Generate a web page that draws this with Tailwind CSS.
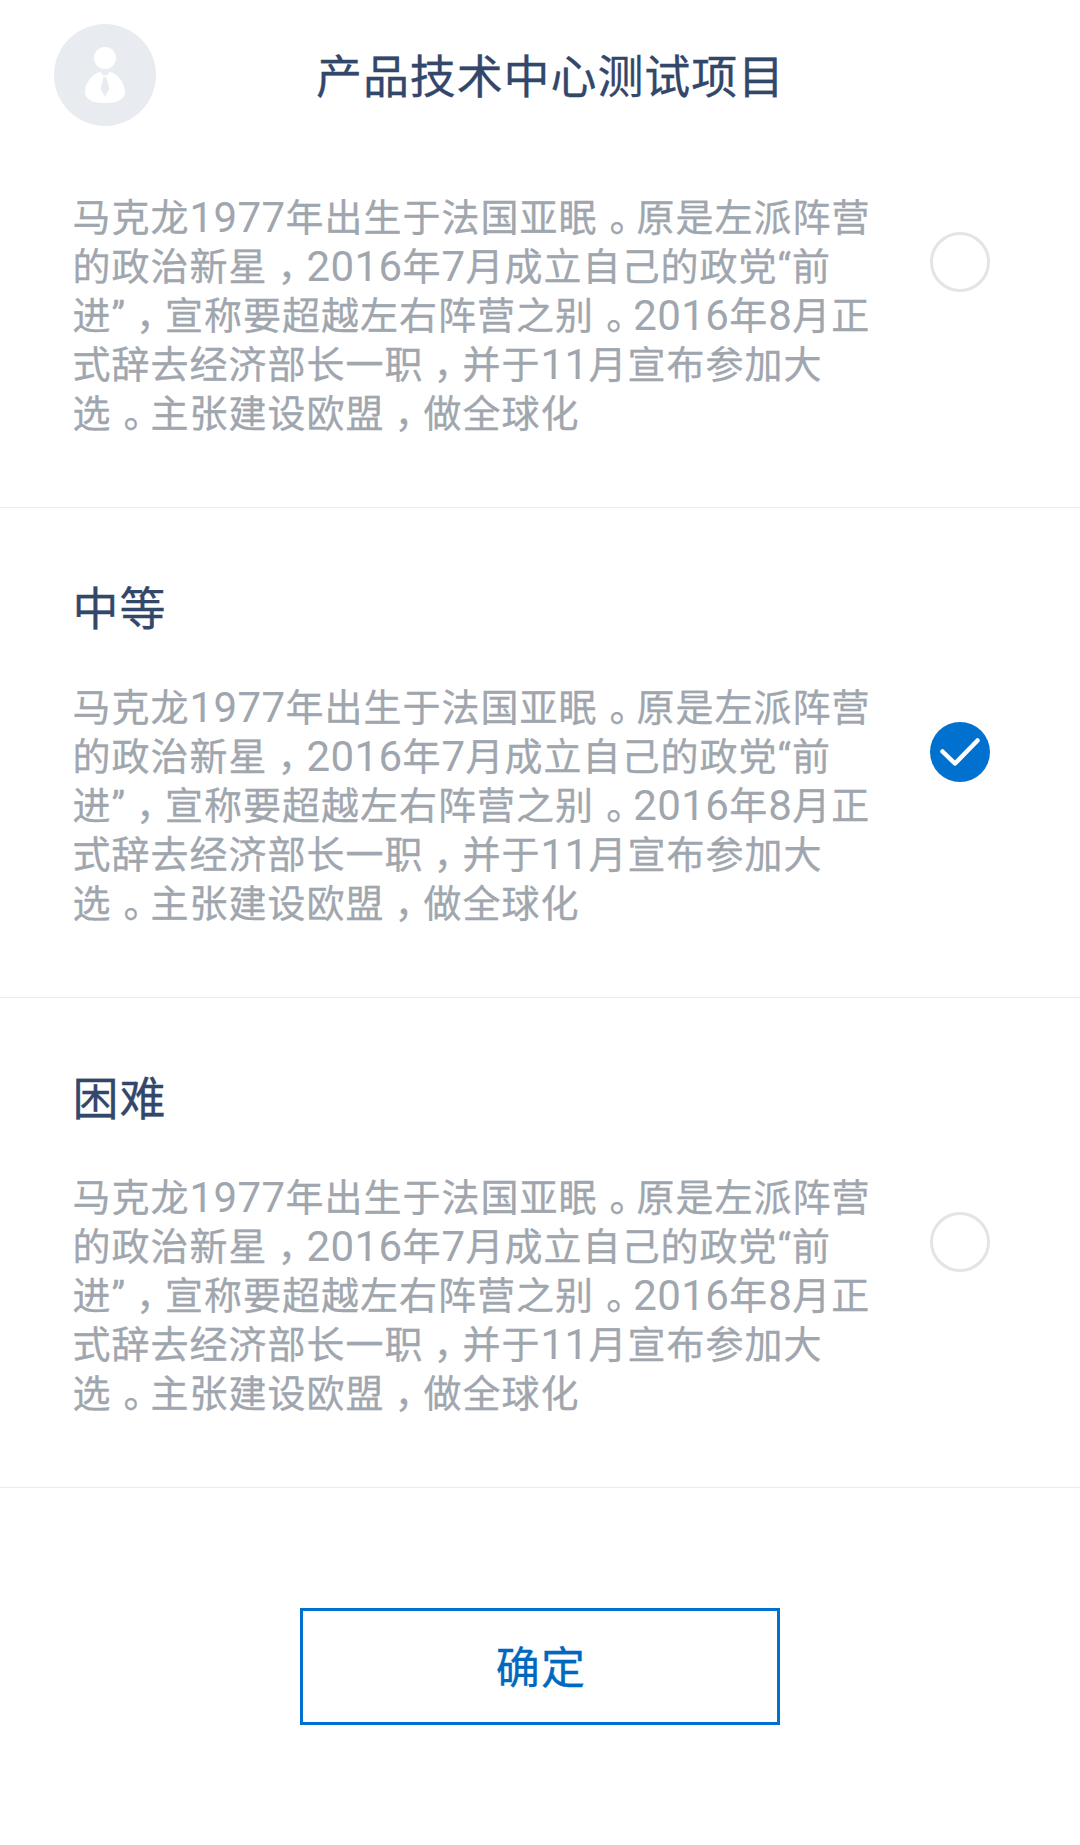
<!DOCTYPE html>
<html lang="zh-CN"><head><meta charset="utf-8"><title>难度选择</title>
<script src="https://cdn.jsdelivr.net/npm/@tailwindcss/browser@4"></script></head>
<body class="bg-white font-[Roboto,'Noto_Sans_CJK_SC',sans-serif]">
<div class="flex h-[1845px] w-[1080px] flex-col overflow-hidden">
<header class="flex h-[150px] shrink-0 items-center px-[54px] text-[#33476b]">
<svg class="size-[102px] shrink-0" viewBox="0 0 102 102"><circle cx="51" cy="51" r="51" fill="#e8ebf0"/><circle cx="51" cy="34" r="11" fill="#fff"/><path d="M46.500 48C37 50 31 60 31 68C31 76 40 79 51 79S71 76 71 68C71 60 65 50 55.500 48L52.500 51.500H49.500Z" fill="#fff"/><path d="M49.500 53H52.500L53 55L55.500 65L51 72.500L46.500 65L49 55Z" fill="#e8ebf0"/></svg>
<h1 class="ml-[160px] pt-[3px] text-[46px] leading-[60px] tracking-[0.9px] whitespace-nowrap [-webkit-text-stroke:0.3px]">产品技术中心测试项目</h1>
</header>
<main id="levels"></main>
<button class="mx-auto mt-[120px] flex h-[117px] w-[480px] items-center justify-center border-[3px] border-[#0071ce] pt-[5px] pl-[2px] text-[44px] leading-[60px] tracking-[1.3px] text-[#0068bf] [-webkit-text-stroke:0.3px]">确定</button>
</div>
<template id="description">
<p class="text-[38px] leading-[49px] tracking-[1px] whitespace-nowrap text-[#9fa6ae] [-webkit-text-stroke:0.3px]">马克龙<b>1977</b>年出生于法国亚眠<i>。</i>原是左派阵营<br>的政治新星<i>，</i><b>2016</b>年<b>7</b>月成立自己的政党“前<br>进”<i>，</i>宣称要超越左右阵营之别<i>。</i><b>2016</b>年<b>8</b>月正<br>式辞去经济部长一职<i>，</i>并于<b>11</b>月宣布参加大<br>选<i>。</i>主张建设欧盟<i>，</i>做全球化</p>
</template>
<script>
const levels = [{ title: '' }, { title: '中等', checked: true }, { title: '困难' }];
const on = '<svg class="mt-[38px] size-[60px]" viewBox="0 0 60 60"><circle cx="30" cy="30" r="30" fill="#0071ce"/><path d="M12.500 29.500L25 41.500L47.500 18.500" fill="none" stroke="#fff" stroke-width="4.500" stroke-linecap="round" stroke-linejoin="round"/></svg>';
const off = '<span class="mt-[38px] size-[60px] rounded-full border-3 border-[#e2e4e8]"></span>';
const text = document.getElementById('description').innerHTML
  .replaceAll('<b>', '<span class="align-[-1px] text-[42px] leading-none tracking-[0.4px] [-webkit-text-stroke:0px]">').replaceAll('</b>', '</span>')
  .replaceAll('<i>。', '<span class="pl-[12px] tracking-[-11px]">。')
  .replaceAll('<i>，', '<span class="pl-[10px] tracking-[-9px]">，').replaceAll('</i>', '</span>');
document.getElementById('levels').innerHTML = levels.map(l => `
<section class="border-b border-[#ebebeb] pr-[90px] pl-[72.5px] ${l.title ? 'h-[490px] pt-[71px]' : 'h-[358px] pt-[44px]'}">
${l.title ? `<h2 class="mb-[45px] text-[46px] leading-[60px] tracking-[0.9px] text-[#33476b] [-webkit-text-stroke:0.3px]">${l.title}</h2>` : ''}
<div class="flex items-start justify-between">${text}${l.checked ? on : off}</div>
</section>`).join('');
</script>
</body></html>
